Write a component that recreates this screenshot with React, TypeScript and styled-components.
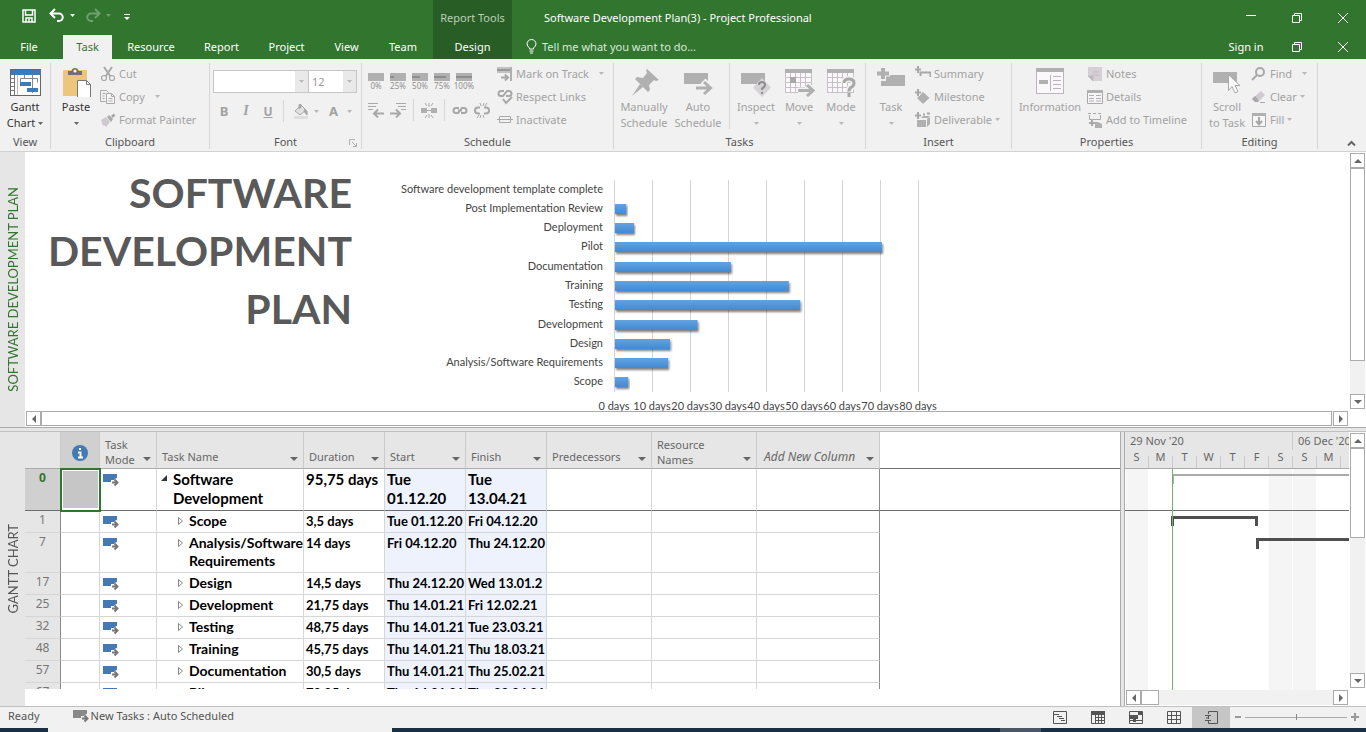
import React from "react";
import styled, { createGlobalStyle, css } from "styled-components";

const ui = `"Noto Sans", "Open Sans", sans-serif`;
const sheet = `Lato, "Open Sans", sans-serif`;

const GlobalStyle = createGlobalStyle`
  * { box-sizing: border-box; }
  body { margin: 0; font-family: ${ui}; font-size: 11px; color: #444; background: #fff; }
  button, select, input { font: inherit; color: inherit; border: 0; background: none; padding: 0; margin: 0; border-radius: 0; }
  svg { display: block; flex: none; }
`;

const Page = styled.div`
  display: flex;
  flex-direction: column;
  height: 100vh;
  min-width: 1320px;
  overflow: hidden;
`;

/* ---------- title bar and tabs ---------- */

const TitleBar = styled.header`
  display: flex;
  flex: none;
  height: 35px;
  background: #31752f;
  color: #fff;
`;

const QuickAccess = styled.div`
  display: flex;
  align-items: center;
  width: 433px;
  padding: 0 0 4px 20px;
`;

const QuickButton = styled.button<{ $w: number; $dim?: boolean }>`
  width: ${(p) => p.$w}px;
  display: flex;
  justify-content: center;
  opacity: ${(p) => (p.$dim ? 0.3 : 1)};
`;

const ContextTitle = styled.div`
  width: 79px;
  background: #285e26;
  color: #b9d0b8;
  text-align: center;
  line-height: 36px;
`;

const WindowTitle = styled.h1`
  flex: 1;
  margin: 0;
  padding-left: 32px;
  font-size: 11px;
  font-weight: 400;
  line-height: 36px;
`;

const WindowButton = styled.button`
  width: 46px;
  display: flex;
  align-items: center;
  justify-content: center;
`;

const TabBar = styled.nav`
  display: flex;
  flex: none;
  height: 24px;
  background: #31752f;
  color: #fff;
`;

const Tab = styled.button<{ $w: number; $active?: boolean; $context?: boolean }>`
  width: ${(p) => p.$w}px;
  line-height: 24px;
  text-align: center;
  ${(p) => p.$active && css`background: #f1f1f1; color: #31752f;`}
  ${(p) => p.$context && css`background: #285e26;`}
`;

const FileTab = styled(Tab)`
  margin-right: 5px;
`;

const TellMe = styled.button`
  flex: 1;
  display: flex;
  align-items: center;
  gap: 5px;
  padding: 0 0 2px 14px;
  color: #dbe8da;
`;

const SignIn = styled.button`
  width: 56px;
  line-height: 24px;
`;

/* ---------- ribbon ---------- */

const Ribbon = styled.div`
  display: flex;
  flex: none;
  height: 93px;
  background: #f1f1f1;
  border-bottom: 1px solid #d2d2d2;
`;

const Group = styled.section<{ $w: number }>`
  flex: 0 0 ${(p) => p.$w}px;
  display: flex;
  flex-direction: column;
  position: relative;
  margin: 4px 0 2px;
  border-right: 1px solid #d6d6d6;
`;

const GroupBody = styled.div`
  flex: 1;
  display: flex;
  padding-left: 3px;
`;

const GroupLabel = styled.div`
  height: 14px;
  line-height: 14px;
  text-align: center;
  color: #555;
`;

const Launcher = styled.button`
  position: absolute;
  right: 4px;
  bottom: 2px;
`;

const BigButton = styled.button<{ $w: number; $on?: boolean }>`
  width: ${(p) => p.$w}px;
  flex: none;
  display: flex;
  flex-direction: column;
  align-items: center;
  padding-top: 2px;
  line-height: 16px;
  color: ${(p) => (p.$on ? "#333" : "#a2a2a2")};
  white-space: nowrap;
  svg.big { margin-bottom: 2px; }
`;

const LabelLine = styled.span`
  display: flex;
  align-items: center;
  justify-content: center;
  gap: 3px;
  height: 16px;
`;

const Stack = styled.div`
  display: flex;
  flex-direction: column;
  padding-left: 2px;
`;

const SmallButton = styled.button`
  display: flex;
  align-items: center;
  height: 23px;
  padding-bottom: 2px;
  gap: 3px;
  color: #a2a2a2;
  white-space: nowrap;
`;

const CaretBox = styled.span<{ $gap?: number }>`
  margin-left: ${(p) => p.$gap ?? 0}px;
`;

const FontPanel = styled.div`
  display: flex;
  flex-direction: column;
  padding-top: 7px;
`;

const Row = styled.div`
  display: flex;
  align-items: center;
`;

const ToolRow = styled(Row)`
  height: 36px;
`;

const SelectBox = styled.label<{ $w: number }>`
  display: flex;
  align-items: center;
  position: relative;
  width: ${(p) => p.$w}px;
  height: 23px;
  border: 1px solid #c6c6c6;
  background: #fff;
  & + & { border-left: 0; }
  select {
    flex: 1;
    height: 100%;
    padding-left: 3px;
    appearance: none;
    color: #9a9a9a;
    outline: 0;
  }
`;

const SelectArrow = styled.span`
  position: absolute;
  top: 0;
  right: 0;
  bottom: 0;
  width: 13px;
  display: flex;
  align-items: center;
  justify-content: center;
  background: #e9e9e9;
  pointer-events: none;
`;

const ToolButton = styled.button<{ $w: number }>`
  width: ${(p) => p.$w}px;
  height: 22px;
  display: flex;
  align-items: center;
  justify-content: center;
  gap: 5px;
  color: #a2a2a2;
  font-size: 12px;
  b { font-size: 13px; }
  i { font-family: "Liberation Serif", serif; font-weight: 700; font-size: 14px; }
  u { font-weight: 700; }
`;

const VRule = styled.span<{ $h: number }>`
  width: 1px;
  height: ${(p) => p.$h}px;
  margin: 0 4px;
  background: #d6d6d6;
`;

const PercentButton = styled.button`
  width: 22px;
  height: 22px;
  display: flex;
  flex-direction: column;
  align-items: center;
  padding-top: 3px;
  font-size: 8px;
  line-height: 10px;
  color: #909090;
`;

const SchedulePanel = styled.div`
  display: flex;
  flex-direction: column;
  width: 130px;
  padding-top: 7px;
`;

const CollapseArea = styled.div`
  flex: 1;
  display: flex;
  align-items: flex-end;
  justify-content: flex-end;
  padding: 0 10px 3px 0;
`;

/* ---------- panes ---------- */

const Pane = styled.div<{ $grow?: boolean }>`
  display: flex;
  flex: ${(p) => (p.$grow ? "1 1 0" : "0 0 275px")};
  min-height: 0;
  overflow: hidden;
`;

const SideLabel = styled.div<{ $active?: boolean }>`
  flex: 0 0 25px;
  display: flex;
  align-items: center;
  justify-content: center;
  background: #e6e6e6;
  color: ${(p) => (p.$active ? "#31752f" : "#555")};
  font-family: ${sheet};
  font-size: 13px;
  span { writing-mode: vertical-rl; transform: rotate(180deg); white-space: nowrap; }
`;

const Splitter = styled.div`
  flex: 0 0 5px;
  background: #e6e6e6;
  border-top: 1px solid #ababab;
  border-bottom: 1px solid #c0c0c0;
`;

const VSplitter = styled.div`
  flex: 0 0 5px;
  background: #e6e6e6;
  border-left: 1px solid #ababab;
  border-right: 1px solid #ababab;
`;

const ReportMain = styled.div`
  flex: 1;
  min-width: 0;
  display: flex;
  flex-direction: column;
`;

const ReportCanvas = styled.div`
  flex: 1;
  min-height: 0;
  display: flex;
  overflow: hidden;
`;

const ReportTitle = styled.h2`
  flex: 0 0 327px;
  margin: 0;
  padding-top: 12px;
  font-family: ${sheet};
  font-size: 41px;
  line-height: 58px;
  font-weight: 700;
  text-align: right;
  color: #595959;
`;

const ChartBox = styled.div`
  padding: 28px 0 0 32px;
  text { font-family: ${sheet}; font-size: 11px; fill: #444; }
`;

/* ---------- scroll bars ---------- */

const VScroll = styled.div<{ $bottom: number }>`
  flex: 0 0 17px;
  display: flex;
  flex-direction: column;
  padding: 1px 1px ${(p) => p.$bottom}px 1px;
  background: linear-gradient(#f1f1f1, #f1f1f1) content-box, #fff;
`;

const HScroll = styled.div<{ $end: number }>`
  flex: 0 0 16px;
  display: flex;
  padding: 0 ${(p) => p.$end}px 1px 1px;
  background: linear-gradient(#f1f1f1, #f1f1f1) content-box, #fff;
`;

const ScrollButton = styled.button`
  flex: 0 0 15px;
  width: 15px;
  height: 15px;
  display: flex;
  align-items: center;
  justify-content: center;
  background: #fff;
  border: 1px solid #ababab;
`;

const VThumb = styled.div<{ $h: number }>`
  height: ${(p) => p.$h}px;
  background: #fff;
  border: 1px solid #ababab;
`;

const HThumb = styled.div<{ $w?: number }>`
  ${(p) => (p.$w ? css`width: ${p.$w}px;` : css`flex: 1;`)}
  margin-right: 1px;
  background: #fff;
  border: 1px solid #ababab;
`;

const Spacer = styled.div`
  flex: 1;
`;

/* ---------- task sheet ---------- */

const SheetArea = styled.div`
  flex: 1;
  min-width: 0;
  padding-bottom: 17px;
  display: flex;
`;

const SheetClip = styled.div`
  flex: 1;
  min-width: 0;
  overflow: hidden;
`;

const Sheet = styled.table`
  width: 100%;
  table-layout: fixed;
  border-collapse: separate;
  border-spacing: 0;
`;

const HeadCell = styled.th<{ $dark?: boolean; $italic?: boolean }>`
  height: 37px;
  padding: 0 5px 1px;
  vertical-align: bottom;
  text-align: left;
  font-weight: 400;
  font-style: ${(p) => (p.$italic ? "italic" : "normal")};
  line-height: 15px;
  color: #666;
  background: ${(p) => (p.$dark ? "#d0d0d0" : "#e6e6e6")};
  border-right: 1px solid #cacaca;
  border-bottom: 1px solid #ababab;
`;

const HeadInner = styled.div<{ $single?: boolean }>`
  display: flex;
  align-items: flex-end;
  justify-content: space-between;
  white-space: nowrap;
  span { padding-bottom: ${(p) => (p.$single ? 3 : 0)}px; }
  svg { margin-bottom: 6px; }
`;

const InfoIcon = styled.div`
  display: flex;
  justify-content: center;
  padding-bottom: 6px;
`;

const HeadFill = styled.th`
  border-bottom: 1px solid #6e6e6e;
`;

const TaskRow = styled.tr<{ $h: number; $summary?: boolean }>`
  height: ${(p) => p.$h}px;
  font-family: ${sheet};
  font-size: ${(p) => (p.$summary ? 15 : 14)}px;
  line-height: ${(p) => (p.$summary ? 19 : 18)}px;
  td, th { border-bottom: 1px solid ${(p) => (p.$summary ? "#6e6e6e" : "#d6d6d6")}; }
`;

const Cell = styled.td<{ $tint?: boolean; $edge?: boolean; $small?: boolean }>`
  padding: 1px 0 0 2px;
  vertical-align: top;
  font-weight: 700;
  ${(p) => p.$small && css`font-size: 13px;`}
  color: #000;
  white-space: pre;
  overflow: hidden;
  background: ${(p) => (p.$tint ? "#edf2fc" : "#fff")};
  border-right: 1px solid ${(p) => (p.$edge ? "#8a8a8a" : "#d6d6d6")};
`;

const IdCell = styled.th<{ $sel?: boolean }>`
  padding: 0;
  vertical-align: top;
  text-align: center;
  font-family: ${ui};
  font-size: 12px;
  line-height: 18px;
  font-weight: ${(p) => (p.$sel ? 700 : 400)};
  color: ${(p) => (p.$sel ? "#31752f" : "#777")};
  background: ${(p) => (p.$sel ? "#d0d0d0" : "#e6e6e6")};
  border-right: 1px solid #8a8a8a;
`;

const SelectedCell = styled.td`
  position: relative;
  background: #c6c6c6;
  outline: 2px solid #31752f;
  outline-offset: -1px;
  box-shadow: inset 0 0 0 2px #fff;
`;

const ModeCell = styled(Cell)`
  padding: 5px 0 0 3px;
`;

const NameLine = styled.div<{ $level: number }>`
  display: flex;
  align-items: flex-start;
  gap: 4px;
  padding-left: ${(p) => (p.$level ? 18 : 2)}px;
  white-space: pre;
  svg { margin-top: 5px; }
`;

const FillCell = styled.td<{ $line?: boolean }>`
  && { border-bottom-color: ${(p) => (p.$line ? "#6e6e6e" : "transparent")}; }
`;

/* ---------- timeline ---------- */

const Timeline = styled.div`
  flex: 0 0 224px;
  display: flex;
  flex-direction: column;
  min-height: 0;
  overflow: hidden;
`;

const TimeHead = styled.div`
  flex: 0 0 37px;
  overflow: hidden;
  background: #e6e6e6;
  border-bottom: 1px solid #ababab;
  color: #666;
  white-space: nowrap;
`;

const Weeks = styled.div`
  display: flex;
  height: 18px;
  line-height: 18px;
`;

const Week = styled.div`
  flex: 0 0 168px;
  padding-left: 5px;
  border-right: 1px solid #cacaca;
`;

const Days = styled.div`
  display: flex;
  height: 18px;
  line-height: 14px;
`;

const Day = styled.div`
  flex: 0 0 24px;
  padding-right: 1px;
  text-align: center;
  background: linear-gradient(#cacaca, #cacaca) right 6px / 1px 12px no-repeat;
`;

const TimeBody = styled.div`
  flex: 1;
  min-height: 0;
  overflow: hidden;
`;

/* ---------- status bar ---------- */

const StatusBar = styled.footer`
  flex: 0 0 22px;
  display: flex;
  align-items: flex-start;
  padding: 0 4px 0 8px;
  background: #f1f1f1;
  border-top: 1px solid #c0c0c0;
  color: #555;
  line-height: 18px;
`;

const StatusMode = styled.button`
  display: flex;
  align-items: center;
  gap: 1px;
  margin-left: 33px;
`;

const ViewButton = styled.button<{ $w: number; $on?: boolean }>`
  width: ${(p) => p.$w}px;
  height: 21px;
  display: flex;
  align-items: center;
  justify-content: center;
  background: ${(p) => (p.$on ? "#c6c6c6" : "none")};
`;

const ZoomGroup = styled.div`
  display: flex;
  align-items: center;
  height: 20px;
`;

const ZoomButton = styled.button`
  width: 15px;
  display: flex;
  justify-content: center;
`;

const ZoomSlider = styled.input`
  appearance: none;
  width: 102px;
  height: 12px;
  background: linear-gradient(#ababab, #ababab) center / 100% 1px no-repeat;
  &::-webkit-slider-thumb { appearance: none; width: 1px; height: 6px; background: #8a8a8a; }
`;

const Taskbar = styled.div`
  flex: 0 0 4px;
  display: flex;
  background: #1b2f42;
`;

const TaskbarWindow = styled.div<{ $x: number; $w: number; $c: string }>`
  margin-left: ${(p) => p.$x}px;
  width: ${(p) => p.$w}px;
  background: ${(p) => p.$c};
`;

/* ---------- icons ---------- */

const Caret = ({ color = "#b8b8b8", w = 5 }: { color?: string; w?: number }) => (
  <svg width={w} height={Math.ceil(w / 2)} viewBox="0 0 6 3" preserveAspectRatio="none">
    <path d="M0 0H6L3 3Z" fill={color} />
  </svg>
);

const Icon = ({ size = 16, children, big }: { size?: number; children: React.ReactNode; big?: boolean }) => (
  <svg className={big ? "big" : undefined} width={size} height={size} viewBox={`0 0 ${size} ${size}`} fill="none">
    {children}
  </svg>
);

const G = "#b0b0b0";
const L = "#a8a8a8";

const RestoreIcon = () => (
  <Icon size={12}>
    <path d="M1.500 3.500h7v7h-7zM3.500 3.500v-2h7v7h-2" stroke="#fff" />
  </Icon>
);
const CloseIcon = () => (
  <Icon size={12}>
    <path d="M1 1L11 11M11 1L1 11" stroke="#fff" />
  </Icon>
);

const GanttIcon = () => (
  <Icon size={32} big>
    <rect x="1.500" y="4.500" width="30" height="26" fill="#fff" stroke="#666" />
    <rect x="2" y="5" width="30" height="5" fill="#3f7ab8" />
    <path d="M1 13.500h4M1 17.500h4M1 21.500h4M1 25.500h4M5.500 10v20" stroke="#777" />
    <path d="M8.500 10v20" stroke="#bbb" />
    <path d="M11.500 17v-3.500h17v4M23.500 10v18M15.500 10v3" stroke="#888" />
    <path d="M11 17h11v4H11zM18 23h11v4H18z" fill="#3f7ab8" />
  </Icon>
);
const PasteIcon = () => (
  <Icon size={32} big>
    <rect x="3" y="5" width="24" height="26" fill="#edc57c" />
    <path d="M8 10V6h3.500q.5-3 3.500-3t3.500 3H22v4Z" fill="#707070" />
    <circle cx="15" cy="6" r="1.500" fill="#fff" />
    <path d="M17.500 15.500h9l4 4v13h-13z" fill="#fff" stroke="#777" />
    <path d="M26.500 15.500v4h4" stroke="#777" />
  </Icon>
);
const CutIcon = () => (
  <Icon>
    <path d="M4 1L10.500 10.500M12 1L5.500 10.500" stroke={L} strokeWidth="2" />
    <circle cx="4" cy="12" r="2.500" stroke={L} strokeWidth="1.200" />
    <circle cx="12" cy="12" r="2.500" stroke={L} strokeWidth="1.200" />
  </Icon>
);
const CopyIcon = () => (
  <Icon>
    <path d="M5.500 12.500h-5v-11h6l2 2M2.500 4.500h3M2.500 7h2M2.500 9.500h2" stroke={L} />
    <path d="M6.500 4.500h5l3 3v7h-8zM11.500 4.500v3h3M8.500 9.500h4M8.500 12h4" stroke={L} fill="#f8f5f8" />
  </Icon>
);
const PainterIcon = () => (
  <Icon>
    <path d="M1 8l5-3 4 5-4 5-2-2-1 1Z" fill="#cfcacf" />
    <path d="M7 5l2-2 4 4-2 3Z" fill={L} />
    <path d="M11 4l2.500-2.500 2 2L13 6Z" fill={L} />
  </Icon>
);
const BucketIcon = () => (
  <Icon>
    <path d="M2 8L8 2l5 5-6 5Z" stroke={L} fill="#e2dfe2" />
    <path d="M6 6V1.500h2V5M12 6q3 2 2 6q-2-2-3-4Z" stroke={L} fill={L} />
    <rect x="1" y="13" width="14" height="3" fill="#dedede" />
  </Icon>
);
const OutdentIcon = () => (
  <Icon>
    <path d="M0 1.500h10M0 4.500h8M0 7.500h5" stroke={L} />
    <path d="M16 11.500H6M10 7.500L6 11.500l4 4" stroke={L} strokeWidth="2" />
  </Icon>
);
const IndentIcon = () => (
  <Icon>
    <path d="M6 1.500h10M8 4.500h8M11 7.500h5" stroke={L} />
    <path d="M0 11.500h10M6 7.500l4 4l-4 4" stroke={L} strokeWidth="2" />
  </Icon>
);
const SplitIcon = () => (
  <Icon>
    <path d="M0 6h6v5H0zM10 6h6v5h-6z" fill={G} />
    <path d="M8 1v4M8 12v4M4 1l2 3M12 1l-2 3M4 16l2-3M12 16l-2-3M6 8.500h4" stroke={L} />
  </Icon>
);
const LinkIcon = () => (
  <Icon>
    <path d="M7 6H4a2.500 2.500 0 0 0 0 5h2l4-5h2a2.500 2.500 0 0 1 0 5H9M6 8.500h4" stroke={L} strokeWidth="2" />
  </Icon>
);
const UnlinkIcon = () => (
  <Icon>
    <path d="M6 5.500H4a3 3 0 0 0 0 6h2M10 5.500h2a3 3 0 0 1 0 6h-2" stroke={L} strokeWidth="2" />
    <path d="M6 1l1 3M10 1l-1 3M6 16l1-3M10 16l-1-3M13 1l-2 3M3 16l2-3" stroke={L} />
  </Icon>
);
const TrackIcon = () => (
  <Icon>
    <path d="M0 1h15v6H0z" fill="#c2c2c2" />
    <path d="M0 3h15v2H0z" fill="#999" />
    <path d="M13 1h2v14h-2z" fill={G} />
    <path d="M4 11.500h7M8 8.500l3 3l-3 3" stroke={L} strokeWidth="2" />
  </Icon>
);
const RespectIcon = () => (
  <Icon>
    <path d="M7 2H4a2.500 2.500 0 0 0 0 5h2l4-5h2a2.500 2.500 0 0 1 0 5H9" stroke={L} strokeWidth="2" />
    <path d="M6 10l3 4l6-6" stroke={L} strokeWidth="2" />
  </Icon>
);
const InactivateIcon = () => (
  <Icon>
    <path d="M2.500 4.500h11v6h-11zM0 7.500h16" stroke={L} />
  </Icon>
);
const PinIcon = () => (
  <Icon size={32} big>
    <path d="M19 4L31 15l-3 1l-2-1l-5 5l1 5l-2 2L7 14l2-2l6 1l4-5l-1-3Z" fill={G} />
    <path d="M12 19L4 31l11-9Z" fill={G} />
  </Icon>
);
const AutoIcon = () => (
  <Icon size={32} big>
    <rect x="2" y="8" width="24" height="11" fill={G} />
    <path d="M13 23h14M21 16l7 7l-7 7" stroke="#f1f1f1" strokeWidth="7" />
    <path d="M14 23h14M22 17l6.500 6L22 29" stroke={G} strokeWidth="3" />
  </Icon>
);
const InspectIcon = () => (
  <Icon size={32} big>
    <rect x="1" y="8" width="24" height="11" fill={G} />
    <path d="M22 13l9 9.500l-9 9.500l-9-9.500z" fill="#d6d3d6" />
    <path d="M19 20q0-3 3-3t3 2.500t-3 4v1.500M22 27v2" stroke="#8d8d8d" strokeWidth="2" />
  </Icon>
);
const CalGrid = () => (
  <>
    <rect x="2.500" y="4.500" width="26" height="23" fill="#fbf8fb" stroke="#c9bfc9" />
    <path d="M3 12.500h25M3 17.500h25M3 22.500h25M7.500 8v19M12.500 8v19M17.500 8v19M22.500 8v19" stroke="#c9bfc9" />
    <rect x="2" y="4" width="27" height="4" fill={G} />
  </>
);
const MoveIcon = () => (
  <Icon size={32} big>
    <CalGrid />
    <rect x="7" y="12" width="6" height="6" fill={L} />
    <path d="M15 25.500h14M24 20l6 5.500l-6 5.500" stroke="#f1f1f1" strokeWidth="6" />
    <path d="M15 25.500h14M24 20l6 5.500l-6 5.500" stroke={G} strokeWidth="3" />
  </Icon>
);
const ModeIcon = () => (
  <Icon size={32} big>
    <CalGrid />
    <path d="M19 18q0-4 5-4t5 4q0 3-3 4.500q-2 1-2 4" stroke="#f1f1f1" strokeWidth="6" />
    <path d="M19 18q0-4 5-4t5 4q0 3-3 4.500q-2 1-2 4M24 28v4" stroke={L} strokeWidth="3" />
  </Icon>
);
const TaskIcon = () => (
  <Icon size={32} big>
    <rect x="6" y="10" width="24" height="11" fill={G} />
    <path d="M8 2v14M1 8.500h14" stroke="#f1f1f1" strokeWidth="6" />
    <path d="M8 3v11M2 8.500h12" stroke={G} strokeWidth="4" />
  </Icon>
);
const SummaryIcon = () => (
  <Icon>
    <path d="M3 0v7M0 3.500h6" stroke={L} strokeWidth="2" />
    <path d="M5.500 10V6.500h10V11" stroke={L} strokeWidth="2" />
  </Icon>
);
const MilestoneIcon = () => (
  <Icon>
    <path d="M8 3l6.500 6L8 15L2 9z" fill={G} />
    <path d="M3 0v7M0 3.500h6" stroke="#f1f1f1" strokeWidth="4" />
    <path d="M3 0v7M0 3.500h6" stroke={L} strokeWidth="2" />
  </Icon>
);
const DeliverableIcon = () => (
  <Icon>
    <path d="M2 8h9v7H2z" fill={G} />
    <path d="M12 7l3-2v7l-3 3zM6 6l2-2h7l-2 2" fill={G} />
    <path d="M3 0v7M0 3.500h6M8 2.500h2M12 1.500h3" stroke={L} strokeWidth="2" />
  </Icon>
);
const InformationIcon = () => (
  <Icon size={32} big>
    <rect x="2.500" y="3.500" width="27" height="25" fill="#fbf8fb" stroke="#bdb3bd" />
    <rect x="2" y="3" width="28" height="4" fill={G} />
    <rect x="5" y="15" width="9" height="4" fill={G} />
    <path d="M16.500 10v16M19 11.500h8M19 15.500h8M19 19.500h8M19 23.500h8" stroke="#bdb3bd" />
  </Icon>
);
const NotesIcon = () => (
  <Icon>
    <path d="M1 1h14v14H6l-5-5z" fill="#d6d0d6" />
    <path d="M1 10h5v5zM6 9h6M6 6h6" stroke="#c2bcc2" fill="#b8b4b8" />
  </Icon>
);
const DetailsIcon = () => (
  <Icon>
    <path d="M.5 1.500h15v13H.5z" stroke={L} fill="#f8f5f8" />
    <path d="M0 1h16v3H0z" fill={G} />
    <path d="M2 6.500h5M2 9.500h5M2 12h5M9 6.500h5M9 9.500h5M9 12h5" stroke={G} />
  </Icon>
);
const TimelineIcon = () => (
  <Icon>
    <path d="M1 1.500h3M6 1.500h3M11 1.500h3M2.500 3v4.500h11V3" stroke={L} />
    <path d="M5 8v6M2 11h6" stroke={L} strokeWidth="2" />
    <path d="M8 10h3l4 2v4H8z" fill={G} />
  </Icon>
);
const ScrollIcon = () => (
  <Icon size={32} big>
    <rect x="2" y="7" width="24" height="11" fill={G} />
    <path d="M17.500 9.500v16l3.500-4l3 6.500l3-1.500l-3-6h5z" fill="#fbf8fb" stroke={L} />
  </Icon>
);
const FindIcon = () => (
  <Icon>
    <circle cx="9" cy="6" r="4" stroke={L} strokeWidth="2" />
    <path d="M6 9L1 14" stroke={L} strokeWidth="2" />
  </Icon>
);
const ClearIcon = () => (
  <Icon>
    <path d="M10 2l4 4l-7 7H4L1 10z" fill="#cfcacf" />
    <path d="M1 10l3-3l4 5l-1 1H4z" fill={L} />
    <path d="M9 13.500h5" stroke={L} />
  </Icon>
);
const FillIcon = () => (
  <Icon>
    <path d="M1.500 1.500h13v13h-13z" stroke={L} fill="#f8f5f8" />
    <path d="M1 1h14v3H1z" fill={G} />
    <path d="M8 5v7M5 9l3 3.500l3-3.500" stroke={L} strokeWidth="2" />
  </Icon>
);
const AutoTaskIcon = ({ color = "#4579b5", back = "#fff" }: { color?: string; back?: string }) => (
  <svg width="17" height="13" viewBox="0 0 17 13" fill="none">
    <path d="M0 0h14v8H0z" fill={color} />
    <path d="M8 8.500h6M11.500 5.500l3 3l-3 3" stroke={back} strokeWidth="5" />
    <path d="M9 8.500h6M11.500 5.500l3 3l-3 3" stroke="#777" strokeWidth="2" />
  </svg>
);

const ScrollArrow = ({ dir }: { dir: "up" | "down" | "left" | "right" }) => {
  const paths = { up: "M0 6h8L4 2z", down: "M0 2h8L4 6z", left: "M6 0v8L2 4z", right: "M2 0v8l4-4z" };
  return (
    <Icon size={8}>
      <path d={paths[dir]} fill="#666" />
    </Icon>
  );
};

/* ---------- data ---------- */

const durations = [
  { name: "Software development template complete", days: 0 },
  { name: "Post Implementation Review", days: 3 },
  { name: "Deployment", days: 5 },
  { name: "Pilot", days: 70.25 },
  { name: "Documentation", days: 30.5 },
  { name: "Training", days: 45.75 },
  { name: "Testing", days: 48.75 },
  { name: "Development", days: 21.75 },
  { name: "Design", days: 14.5 },
  { name: "Analysis/Software Requirements", days: 14 },
  { name: "Scope", days: 3.5 },
];

const DurationChart = () => {
  const left = 230;
  const tick = 38;
  const height = 212;
  const step = height / durations.length;
  return (
    <svg width="560" height="240" role="img" aria-label="Task durations in days">
      <defs>
        <linearGradient id="bar" x1="0" y1="0" x2="0" y2="1">
          <stop offset="0" stopColor="#62a3e0" />
          <stop offset="1" stopColor="#4389d2" />
        </linearGradient>
        <filter id="shadow" x="-10%" y="-30%" width="120%" height="180%">
          <feDropShadow dx="1" dy="2" stdDeviation="1" floodOpacity="0.5" />
        </filter>
      </defs>
      {Array.from({ length: 9 }, (_, i) => (
        <g key={i}>
          <path d={`M${left + i * tick + 0.5} 0V${height}`} stroke="#d4d4d4" />
          <text x={left + i * tick} y={height + 18} textAnchor="middle">{`${i * 10} days`}</text>
        </g>
      ))}
      {durations.map((d, i) => {
        const mid = Math.round(step * (i + 0.5));
        return (
          <g key={d.name}>
            <text x={left - 11} y={mid + 3} textAnchor="end">{d.name}</text>
            {d.days > 0 && (
              <rect x={left + 1} y={mid - 5} width={(d.days * tick) / 10} height="10" fill="url(#bar)" filter="url(#shadow)" />
            )}
          </g>
        );
      })}
    </svg>
  );
};

type Task = { id: number; name: string; duration: string; start: string; finish: string; h: number; level: number };

const tasks: Task[] = [
  { id: 0, name: "Software\nDevelopment", duration: "95,75 days", start: "Tue\n01.12.20", finish: "Tue\n13.04.21", h: 42, level: 0 },
  { id: 1, name: "Scope", duration: "3,5 days", start: "Tue 01.12.20", finish: "Fri 04.12.20", h: 22, level: 1 },
  { id: 7, name: "Analysis/Software\nRequirements", duration: "14 days", start: "Fri 04.12.20", finish: "Thu 24.12.20", h: 40, level: 1 },
  { id: 17, name: "Design", duration: "14,5 days", start: "Thu 24.12.20", finish: "Wed 13.01.2", h: 22, level: 1 },
  { id: 25, name: "Development", duration: "21,75 days", start: "Thu 14.01.21", finish: "Fri 12.02.21", h: 22, level: 1 },
  { id: 32, name: "Testing", duration: "48,75 days", start: "Thu 14.01.21", finish: "Tue 23.03.21", h: 22, level: 1 },
  { id: 48, name: "Training", duration: "45,75 days", start: "Thu 14.01.21", finish: "Thu 18.03.21", h: 22, level: 1 },
  { id: 57, name: "Documentation", duration: "30,5 days", start: "Thu 14.01.21", finish: "Thu 25.02.21", h: 22, level: 1 },
  { id: 67, name: "Pilot", duration: "70,25 days", start: "Thu 14.01.21", finish: "Thu 22.04.21", h: 22, level: 1 },
];

const columns = [
  { label: "Task\nMode", w: 57 },
  { label: "Task Name", w: 147 },
  { label: "Duration", w: 81 },
  { label: "Start", w: 81 },
  { label: "Finish", w: 81 },
  { label: "Predecessors", w: 105 },
  { label: "Resource\nNames", w: 105 },
  { label: "Add New Column", w: 123, italic: true },
];

const Pre = styled.span<{ $wide?: boolean }>`
  white-space: pre;
  ${(p) => p.$wide && css`font-size: 12px; padding-left: 2px;`}
`;

const percents = [0, 25, 50, 75, 100];

export default function App() {
  return (
    <>
      <GlobalStyle />
      <Page>
        <TitleBar>
          <QuickAccess>
            <QuickButton $w={18} aria-label="Save">
              <Icon><path d="M2 2h12v12H2zM4.500 2v5h7V2M5 14v-4h6v4M8 11v3" stroke="#fff" strokeWidth="1.500" /></Icon>
            </QuickButton>
            <QuickButton $w={48} aria-label="Undo">
              <Icon><path d="M1.500 5.500H10a3.700 3.700 0 0 1 0 7.500H8M6 1L1.500 5.500L6 10" stroke="#fff" strokeWidth="2" /></Icon>
              <CaretBox $gap={5}><svg width="5" height="14"><path d="M0 6h5L2.500 9z" fill="#fff" /></svg></CaretBox>
            </QuickButton>
            <QuickButton $w={24} $dim aria-label="Redo">
              <Icon><path d="M14.500 5.500H6a3.700 3.700 0 0 0 0 7.500h2M10 1l4.500 4.500L10 10" stroke="#fff" strokeWidth="2" /></Icon>
              <CaretBox $gap={5}><svg width="5" height="14"><path d="M0 6h5L2.500 9z" fill="#fff" /></svg></CaretBox>
            </QuickButton>
            <QuickButton $w={34} aria-label="Customize Quick Access Toolbar">
              <Icon size={8}><path d="M1 2.500h6" stroke="#fff" /><path d="M1 5h6L4 8z" fill="#fff" /></Icon>
            </QuickButton>
          </QuickAccess>
          <ContextTitle>Report Tools</ContextTitle>
          <WindowTitle>Software Development Plan(3) - Project Professional</WindowTitle>
          <WindowButton aria-label="Minimize"><Icon size={12}><path d="M1 3.500h10" stroke="#fff" /></Icon></WindowButton>
          <WindowButton aria-label="Restore"><RestoreIcon /></WindowButton>
          <WindowButton aria-label="Close"><CloseIcon /></WindowButton>
        </TitleBar>

        <TabBar>
          <FileTab $w={58}>File</FileTab>
          <Tab $w={49} $active>Task</Tab>
          <Tab $w={78}>Resource</Tab>
          <Tab $w={63}>Report</Tab>
          <Tab $w={67}>Project</Tab>
          <Tab $w={53}>View</Tab>
          <Tab $w={60}>Team</Tab>
          <Tab $w={79} $context>Design</Tab>
          <TellMe>
            <svg width="11" height="15" viewBox="0 0 11 15" fill="none">
              <path d="M3.500 10V9Q1 7 1 5a4.500 4.500 0 0 1 9 0q0 2-2.500 4v1zM3.500 12h4M4 14h3" stroke="#fff" />
            </svg>
            Tell me what you want to do...
          </TellMe>
          <SignIn>Sign in</SignIn>
          <WindowButton aria-label="Restore document"><RestoreIcon /></WindowButton>
          <WindowButton aria-label="Close document"><CloseIcon /></WindowButton>
        </TabBar>

        <Ribbon>
          <Group $w={51}>
            <GroupBody>
              <BigButton $w={44} $on>
                <GanttIcon />
                <LabelLine>Gantt</LabelLine>
                <LabelLine>Chart <Caret color="#666" /></LabelLine>
              </BigButton>
            </GroupBody>
            <GroupLabel>View</GroupLabel>
          </Group>

          <Group $w={159}>
            <GroupBody>
              <BigButton $w={44} $on>
                <PasteIcon />
                <LabelLine>Paste</LabelLine>
                <LabelLine><Caret color="#666" /></LabelLine>
              </BigButton>
              <Stack>
                <SmallButton><CutIcon />Cut</SmallButton>
                <SmallButton><CopyIcon />Copy<CaretBox $gap={7}><Caret /></CaretBox></SmallButton>
                <SmallButton><PainterIcon />Format Painter</SmallButton>
              </Stack>
            </GroupBody>
            <GroupLabel>Clipboard</GroupLabel>
          </Group>

          <Group $w={152}>
            <GroupBody>
              <FontPanel>
                <Row>
                  <SelectBox $w={96}>
                    <select aria-label="Font"><option></option></select>
                    <SelectArrow><Caret /></SelectArrow>
                  </SelectBox>
                  <SelectBox $w={48}>
                    <select aria-label="Font size"><option>12</option></select>
                    <SelectArrow><Caret /></SelectArrow>
                  </SelectBox>
                </Row>
                <ToolRow>
                  <ToolButton $w={22} aria-label="Bold"><b>B</b></ToolButton>
                  <ToolButton $w={22} aria-label="Italic"><i>I</i></ToolButton>
                  <ToolButton $w={22} aria-label="Underline"><u>U</u></ToolButton>
                  <VRule $h={22} />
                  <ToolButton $w={35} aria-label="Background color"><BucketIcon /><Caret /></ToolButton>
                  <ToolButton $w={35} aria-label="Font color"><b>A</b><CaretBox $gap={4}><Caret /></CaretBox></ToolButton>
                </ToolRow>
              </FontPanel>
            </GroupBody>
            <GroupLabel>Font</GroupLabel>
            <Launcher aria-label="Font settings">
              <Icon size={8}><path d="M.5 6V.5H6M3 3l4 4M7.500 4v3.500H4" stroke="#b0b0b0" /></Icon>
            </Launcher>
          </Group>

          <Group $w={252}>
            <GroupBody>
              <SchedulePanel>
                <Row>
                  {percents.map((p) => (
                    <PercentButton key={p}>
                      <svg width="16" height="8">
                        <rect width="16" height="8" fill={G} />
                        <rect y="3" width={(16 * p) / 100} height="2" fill="#8d8d8d" />
                      </svg>
                      {p}%
                    </PercentButton>
                  ))}
                </Row>
                <ToolRow>
                  <ToolButton $w={22} aria-label="Outdent"><OutdentIcon /></ToolButton>
                  <ToolButton $w={22} aria-label="Indent"><IndentIcon /></ToolButton>
                  <VRule $h={22} />
                  <ToolButton $w={22} aria-label="Split task"><SplitIcon /></ToolButton>
                  <VRule $h={22} />
                  <ToolButton $w={22} aria-label="Link tasks"><LinkIcon /></ToolButton>
                  <ToolButton $w={22} aria-label="Unlink tasks"><UnlinkIcon /></ToolButton>
                </ToolRow>
              </SchedulePanel>
              <Stack>
                <SmallButton><TrackIcon />Mark on Track<CaretBox $gap={7}><Caret /></CaretBox></SmallButton>
                <SmallButton><RespectIcon />Respect Links</SmallButton>
                <SmallButton><InactivateIcon />Inactivate</SmallButton>
              </Stack>
            </GroupBody>
            <GroupLabel>Schedule</GroupLabel>
          </Group>

          <Group $w={252}>
            <GroupBody>
              <BigButton $w={54}>
                <PinIcon />
                <LabelLine>Manually</LabelLine>
                <LabelLine>Schedule</LabelLine>
              </BigButton>
              <BigButton $w={54}>
                <AutoIcon />
                <LabelLine>Auto</LabelLine>
                <LabelLine>Schedule</LabelLine>
              </BigButton>
              <VRule $h={66} />
              <BigButton $w={44}>
                <InspectIcon />
                <LabelLine>Inspect</LabelLine>
                <LabelLine><Caret /></LabelLine>
              </BigButton>
              <BigButton $w={42}>
                <MoveIcon />
                <LabelLine>Move</LabelLine>
                <LabelLine><Caret /></LabelLine>
              </BigButton>
              <BigButton $w={42}>
                <ModeIcon />
                <LabelLine>Mode</LabelLine>
                <LabelLine><Caret /></LabelLine>
              </BigButton>
            </GroupBody>
            <GroupLabel>Tasks</GroupLabel>
          </Group>

          <Group $w={146}>
            <GroupBody>
              <BigButton $w={44}>
                <TaskIcon />
                <LabelLine>Task</LabelLine>
                <LabelLine><Caret /></LabelLine>
              </BigButton>
              <Stack>
                <SmallButton><SummaryIcon />Summary</SmallButton>
                <SmallButton><MilestoneIcon />Milestone</SmallButton>
                <SmallButton><DeliverableIcon />Deliverable<Caret /></SmallButton>
              </Stack>
            </GroupBody>
            <GroupLabel>Insert</GroupLabel>
          </Group>

          <Group $w={190}>
            <GroupBody>
              <BigButton $w={70}>
                <InformationIcon />
                <LabelLine>Information</LabelLine>
              </BigButton>
              <Stack>
                <SmallButton><NotesIcon />Notes</SmallButton>
                <SmallButton><DetailsIcon />Details</SmallButton>
                <SmallButton><TimelineIcon />Add to Timeline</SmallButton>
              </Stack>
            </GroupBody>
            <GroupLabel>Properties</GroupLabel>
          </Group>

          <Group $w={116}>
            <GroupBody>
              <BigButton $w={44}>
                <ScrollIcon />
                <LabelLine>Scroll</LabelLine>
                <LabelLine>to Task</LabelLine>
              </BigButton>
              <Stack>
                <SmallButton><FindIcon />Find<CaretBox $gap={7}><Caret /></CaretBox></SmallButton>
                <SmallButton><ClearIcon />Clear<Caret /></SmallButton>
                <SmallButton><FillIcon />Fill<Caret /></SmallButton>
              </Stack>
            </GroupBody>
            <GroupLabel>Editing</GroupLabel>
          </Group>

          <CollapseArea>
            <button aria-label="Collapse the ribbon">
              <Icon size={9}><path d="M1 6.500L4.500 3L8 6.500" stroke="#666" strokeWidth="2" /></Icon>
            </button>
          </CollapseArea>
        </Ribbon>

        <Pane>
          <SideLabel $active><span>SOFTWARE DEVELOPMENT PLAN</span></SideLabel>
          <ReportMain>
            <ReportCanvas>
              <ReportTitle>SOFTWARE DEVELOPMENT PLAN</ReportTitle>
              <ChartBox><DurationChart /></ChartBox>
            </ReportCanvas>
            <HScroll $end={1}>
              <ScrollButton aria-label="Scroll left"><ScrollArrow dir="left" /></ScrollButton>
              <HThumb />
              <ScrollButton aria-label="Scroll right"><ScrollArrow dir="right" /></ScrollButton>
            </HScroll>
          </ReportMain>
          <VScroll $bottom={18}>
            <ScrollButton aria-label="Scroll up"><ScrollArrow dir="up" /></ScrollButton>
            <VThumb $h={193} />
            <Spacer />
            <ScrollButton aria-label="Scroll down"><ScrollArrow dir="down" /></ScrollButton>
          </VScroll>
        </Pane>

        <Splitter />

        <Pane $grow>
          <SideLabel><span>GANTT CHART</span></SideLabel>
          <SheetArea>
            <SheetClip>
              <Sheet>
                <colgroup>
                  <col width={36} />
                  <col width={39} />
                  {columns.map((c) => <col key={c.label} width={c.w} />)}
                  <col />
                </colgroup>
                <thead>
                  <tr>
                    <HeadCell aria-label="ID" />
                    <HeadCell $dark>
                      <InfoIcon>
                        <Icon>
                          <circle cx="8" cy="8" r="8" fill="#4579b5" />
                          <path d="M8 3v2M6 7.500h2.500V12M6 12.500h5" stroke="#fff" strokeWidth="2" />
                        </Icon>
                      </InfoIcon>
                    </HeadCell>
                    {columns.map((c) => (
                      <HeadCell key={c.label} $italic={c.italic}>
                        <HeadInner $single={!c.label.includes("\n")}>
                          <Pre $wide={c.italic}>{c.label}</Pre>
                          <Caret color="#666" w={8} />
                        </HeadInner>
                      </HeadCell>
                    ))}
                    <HeadFill aria-label="Empty" />
                  </tr>
                </thead>
                <tbody>
                  {tasks.map((t) => {
                    const summary = t.level === 0;
                    return (
                      <TaskRow key={t.id} $h={t.h} $summary={summary}>
                        <IdCell $sel={summary}>{t.id}</IdCell>
                        {summary ? <SelectedCell /> : <Cell />}
                        <ModeCell><AutoTaskIcon /></ModeCell>
                        <Cell>
                          <NameLine $level={t.level}>
                            {summary ? (
                              <Icon size={8}><path d="M6 0v6H0z" fill="#333" /></Icon>
                            ) : (
                              <Icon size={8}><path d="M1.500 .5v7l4-3.500z" stroke="#888" /></Icon>
                            )}
                            {t.name}
                          </NameLine>
                        </Cell>
                        <Cell $small={!summary}>{t.duration}</Cell>
                        <Cell $tint $small={!summary}>{t.start}</Cell>
                        <Cell $tint $small={!summary}>{t.finish}</Cell>
                        <Cell />
                        <Cell />
                        <Cell $edge />
                        <FillCell $line={summary} />
                      </TaskRow>
                    );
                  })}
                </tbody>
              </Sheet>
            </SheetClip>
          </SheetArea>
          <VSplitter />
          <Timeline>
            <TimeHead>
              <Weeks>
                <Week>29 Nov '20</Week>
                <Week>06 Dec '20</Week>
              </Weeks>
              <Days>
                {"SMTWTFSSMT".split("").map((d, i) => <Day key={i}>{d}</Day>)}
              </Days>
            </TimeHead>
            <TimeBody>
              <svg width="224" height="1000" fill="none">
                <path d="M1 0h22v1000H1zM144 0h23v1000h-23zM168 0h23v1000h-23z" fill="#f5f5f5" />
                <path d="M0 41.500h224" stroke="#6e6e6e" />
                <path d="M48 15V6h180" stroke="#ababab" strokeWidth="2" />
                <path d="M46 47h87v10h-3v-7H49v7h-3zM131 69h93v3h-90v8h-3z" fill="#4f4f4f" />
                <path d="M47.500 0v1000" stroke="#6fb36a" />
              </svg>
            </TimeBody>
            <HScroll $end={1}>
              <ScrollButton aria-label="Scroll left"><ScrollArrow dir="left" /></ScrollButton>
              <HThumb $w={18} />
              <Spacer />
              <ScrollButton aria-label="Scroll right"><ScrollArrow dir="right" /></ScrollButton>
            </HScroll>
          </Timeline>
          <VScroll $bottom={18}>
            <ScrollButton aria-label="Scroll up"><ScrollArrow dir="up" /></ScrollButton>
            <VThumb $h={90} />
            <Spacer />
            <ScrollButton aria-label="Scroll down"><ScrollArrow dir="down" /></ScrollButton>
          </VScroll>
        </Pane>

        <StatusBar>
          <span>Ready</span>
          <StatusMode><AutoTaskIcon color="#888" back="#f1f1f1" />New Tasks : Auto Scheduled</StatusMode>
          <Spacer />
          <ViewButton $w={38} aria-label="Gantt Chart">
            <Icon size={14}><path d="M.5 .5h13v12H.5zM1 3.500h5M4 5.500h5M6 7.500h5M8 9.500h4" stroke="#555" /></Icon>
          </ViewButton>
          <ViewButton $w={38} aria-label="Task Usage">
            <Icon size={14}><path d="M.5 .5h13v12H.5zM4.500 4v9M7.500 4v9M10.500 4v9M4 6.500h10M4 9.500h10" stroke="#555" /><path d="M0 0h14v4H0z" fill="#555" /></Icon>
          </ViewButton>
          <ViewButton $w={38} aria-label="Team Planner">
            <Icon size={14}><path d="M.5 .5h13v12H.5zM1 9.500h12" stroke="#555" /><path d="M1 4h8v4H1zM9 1h4v3H9zM4 8h3v3H4z" fill="#555" /></Icon>
          </ViewButton>
          <ViewButton $w={37} aria-label="Resource Sheet">
            <Icon size={14}><path d="M.5 .5h13v12H.5zM4.500 1v12M9.500 1v12M1 4.500h12M1 8.500h12" stroke="#555" /></Icon>
          </ViewButton>
          <ViewButton $w={38} $on aria-label="Report">
            <Icon size={14}><path d="M4.500 3V.5h9v12h-9V10M4.500 5v3M1 4.500h6M1 9.500h6M2 7h3" stroke="#555" /></Icon>
          </ViewButton>
          <ZoomGroup>
            <ZoomButton aria-label="Zoom out"><Icon size={8}><path d="M1 4h6" stroke="#999" strokeWidth="2" /></Icon></ZoomButton>
            <ZoomSlider type="range" aria-label="Zoom" defaultValue={50} />
            <ZoomButton aria-label="Zoom in"><Icon size={8}><path d="M0 4h8M4 0v8" stroke="#999" strokeWidth="2" /></Icon></ZoomButton>
          </ZoomGroup>
        </StatusBar>
        <Taskbar>
          <TaskbarWindow $x={48} $w={344} $c="#f1f1f1" />
          <TaskbarWindow $x={608} $w={41} $c="#4a5766" />
        </Taskbar>
      </Page>
    </>
  );
}
